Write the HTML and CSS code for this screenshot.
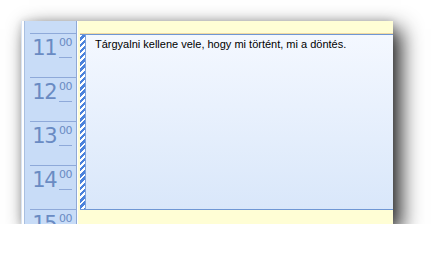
FILE: index.html
```html
<!DOCTYPE html>
<html>
<head>
<meta charset="utf-8">
<link rel="stylesheet" href="styles.css">
</head>
<body>
<div class="frame">
  <div class="edge"></div>
  <div class="times">
    <div class="lead"></div>
    <div class="hour"><span class="h">11</span><span class="m">00</span></div>
    <div class="hour"><span class="h">12</span><span class="m">00</span></div>
    <div class="hour"><span class="h">13</span><span class="m">00</span></div>
    <div class="hour"><span class="h">14</span><span class="m">00</span></div>
    <div class="hour"><span class="h">15</span><span class="m">00</span></div>
  </div>
  <div class="day">
    <div class="slot-top"></div>
    <div class="event">
      <div class="busy"></div>
      <div class="body">Tárgyalni kellene vele, hogy mi történt, mi a döntés.</div>
    </div>
  </div>
</div>
</body>
</html>
```
FILE: styles.css
```css
html, body {
  margin: 0;
  padding: 0;
  background: #ffffff;
}
body {
  padding: 21px 0 0 21px;
}
.frame {
  width: 372px;
  height: 203px;
  display: flex;
  overflow: hidden;
  background: #fffed5;
  box-shadow: 8px 8px 20px rgba(0, 0, 0, 0.85), 0 0 8px rgba(0, 0, 0, 0.14);
}
.edge {
  width: 2px;
  flex: none;
  border-left: 1px solid #d9e3f1;
  background: #ffffff;
}
.times {
  width: 51px;
  flex: none;
  background: #c8dcf7;
  border-left: 1px solid #a9bfe0;
  border-right: 1px solid #8ea9d6;
  display: flex;
  flex-direction: column;
}
.lead {
  height: 12px;
  flex: none;
}
.hour {
  height: 43px;
  flex: none;
  margin-left: 5px;
  border-top: 1px solid #8ea9d9;
  display: flex;
  justify-content: flex-end;
  align-items: flex-start;
  padding-right: 4px;
  font-family: "DejaVu Sans", sans-serif;
  color: #6a8bc3;
}
.h {
  font-size: 21px;
  line-height: 21px;
  margin-top: 4px;
  letter-spacing: -1.5px;
  margin-right: 3px;
}
.m {
  font-size: 11px;
  line-height: 11px;
  margin-top: 3px;
  padding-bottom: 9px;
  border-bottom: 1px solid #8ea9d9;
  letter-spacing: -0.5px;
}
.day {
  flex: 1;
  display: flex;
  flex-direction: column;
  border-left: 1px solid #ffffff;
  padding-left: 2px;
}
.slot-top {
  height: 12px;
  flex: none;
  border-bottom: 1px solid #f0d9a2;
}
.event {
  height: 174px;
  flex: none;
  display: flex;
  border-top: 1px solid #6f97d4;
  border-bottom: 1px solid #6f97d4;
  background: linear-gradient(to bottom, #f4f8ff, #d9e7fa);
}
.busy {
  width: 5px;
  flex: none;
  border-right: 1px solid #7fa3dc;
  background: repeating-linear-gradient(135deg, #ffffff 0, #ffffff 2px, #4b82dc 2px, #4b82dc 4.4px);
}
.body {
  padding: 3px 0 0 9px;
  font-family: "Liberation Sans", Arial, sans-serif;
  font-size: 11px;
  color: #000000;
  white-space: nowrap;
}
```
